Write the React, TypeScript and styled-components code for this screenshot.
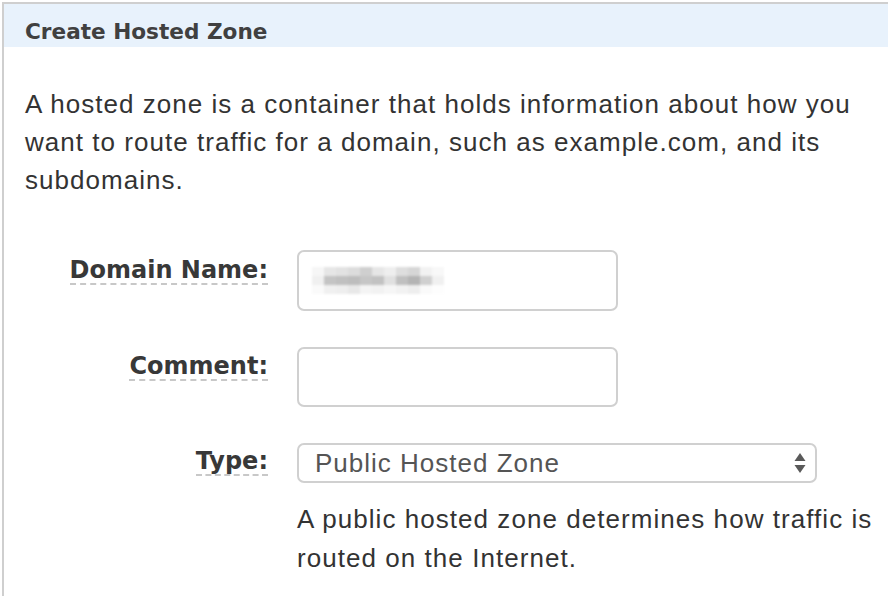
import React from "react";
import styled, { createGlobalStyle } from "styled-components";

const Global = createGlobalStyle`
  html, body { margin: 0; padding: 0; background: #ffffff; }
  body { width: 888px; height: 598px; overflow: hidden; }
`;

const Panel = styled.section`
  margin: 2px 0 0 2px;
  border-top: 2px solid #cfcfcf;
  border-left: 2px solid #cfcfcf;
  height: 594px;
  box-sizing: border-box;
`;

const Header = styled.header`
  height: 43px;
  box-sizing: border-box;
  background: #e8f2fc;
  display: flex;
  align-items: flex-end;
  padding: 0 0 2px 21px;
  font-family: "DejaVu Sans", Verdana, sans-serif;
  font-weight: bold;
  font-size: 21.6px;
  line-height: 26px;
  color: #404040;
`;

const Body = styled.div`
  padding: 38px 0 0 21px;
`;

const Description = styled.p`
  margin: 0;
  font-family: "Liberation Sans", Arial, sans-serif;
  font-size: 26px;
  letter-spacing: 1.03px;
  line-height: 38px;
  color: #333333;
  width: 845px;
`;

const Form = styled.div`
  margin-top: 51px;
  display: grid;
  grid-template-columns: 264px 560px;
  column-gap: 29px;
  row-gap: 36px;
  align-items: start;
`;

const LabelCell = styled.div<{ $offset: number }>`
  display: flex;
  justify-content: flex-end;
  padding-top: ${(p) => p.$offset}px;
`;

const Label = styled.label`
  font-family: "DejaVu Sans", Verdana, sans-serif;
  font-weight: bold;
  font-size: 24px;
  line-height: 26px;
  color: #383838;
  border-bottom: 2px dashed #c8c8c8;
  padding-bottom: 0;
`;

const TextBox = styled.div<{ $h: number }>`
  width: 321px;
  height: ${(p) => p.$h}px;
  box-sizing: border-box;
  border: 2px solid #d0d0d0;
  border-radius: 7px;
  display: flex;
  align-items: center;
  padding-left: 13px;
`;

const Blur = styled.div`
  display: grid;
  grid-template-columns: repeat(11, 12px);
  grid-template-rows: repeat(3, 9px);
  filter: blur(1px);
`;

const Pix = styled.span<{ $c: string }>`
  background: ${(p) => p.$c};
`;

const SelectBox = styled.div`
  width: 520px;
  height: 40px;
  box-sizing: border-box;
  border: 2px solid #d0d0d0;
  border-radius: 7px;
  display: flex;
  align-items: center;
  justify-content: space-between;
  padding: 0 9px 0 16px;
  font-family: "Liberation Sans", Arial, sans-serif;
  font-size: 26px;
  letter-spacing: 1px;
  color: #555555;
`;

const Arrows = styled.svg`
  width: 12px;
  height: 24px;
  display: block;
`;

const Help = styled.p`
  grid-column: 2;
  margin: -19px 0 0 0;
  font-family: "Liberation Sans", Arial, sans-serif;
  font-size: 26px;
  letter-spacing: 1.05px;
  line-height: 39px;
  color: #333333;
  width: 590px;
`;

const pixRows = [
  ["#f6f6f6", "#e6e6e6", "#e2e2e2", "#dcdcdc", "#cfcfcf", "#e6e6e6", "#eeeeee", "#dedede", "#d6d6d6", "#f2f2f2", "#f8f8f8"],
  ["#f0f0f0", "#c4c4c4", "#c0c0c0", "#bdbdbd", "#c6c6c6", "#c2c2c2", "#e0e0e0", "#c0c0c0", "#b4b4b4", "#d0d0d0", "#f0f0f0"],
  ["#fafafa", "#f0f0f0", "#eeeeee", "#e8e8e8", "#f4f4f4", "#f2f2f2", "#f6f6f6", "#f2f2f2", "#eeeeee", "#fafafa", "#fdfdfd"],
];

export default function App() {
  return (
    <>
      <Global />
      <Panel>
        <Header>Create Hosted Zone</Header>
        <Body>
          <Description>
            A hosted zone is a container that holds information about how you
            want to route traffic for a domain, such as example.com, and its
            subdomains.
          </Description>
        </Body>
        <Form>
          <LabelCell $offset={7}>
            <Label>Domain Name:</Label>
          </LabelCell>
          <TextBox $h={61}>
            <Blur>
              {pixRows.flat().map((c, i) => (
                <Pix key={i} $c={c} />
              ))}
            </Blur>
          </TextBox>
          <LabelCell $offset={6}>
            <Label>Comment:</Label>
          </LabelCell>
          <TextBox $h={60} />
          <LabelCell $offset={5}>
            <Label>Type:</Label>
          </LabelCell>
          <SelectBox>
            <span>Public Hosted Zone</span>
            <Arrows viewBox="0 0 12 24">
              <path d="M6 2 L11.5 10 L0.5 10 Z" fill="#5a5a5a" />
              <path d="M0.5 14 L11.5 14 L6 22 Z" fill="#5a5a5a" />
            </Arrows>
          </SelectBox>
          <Help>
            A public hosted zone determines how traffic is routed on the
            Internet.
          </Help>
        </Form>
      </Panel>
    </>
  );
}
